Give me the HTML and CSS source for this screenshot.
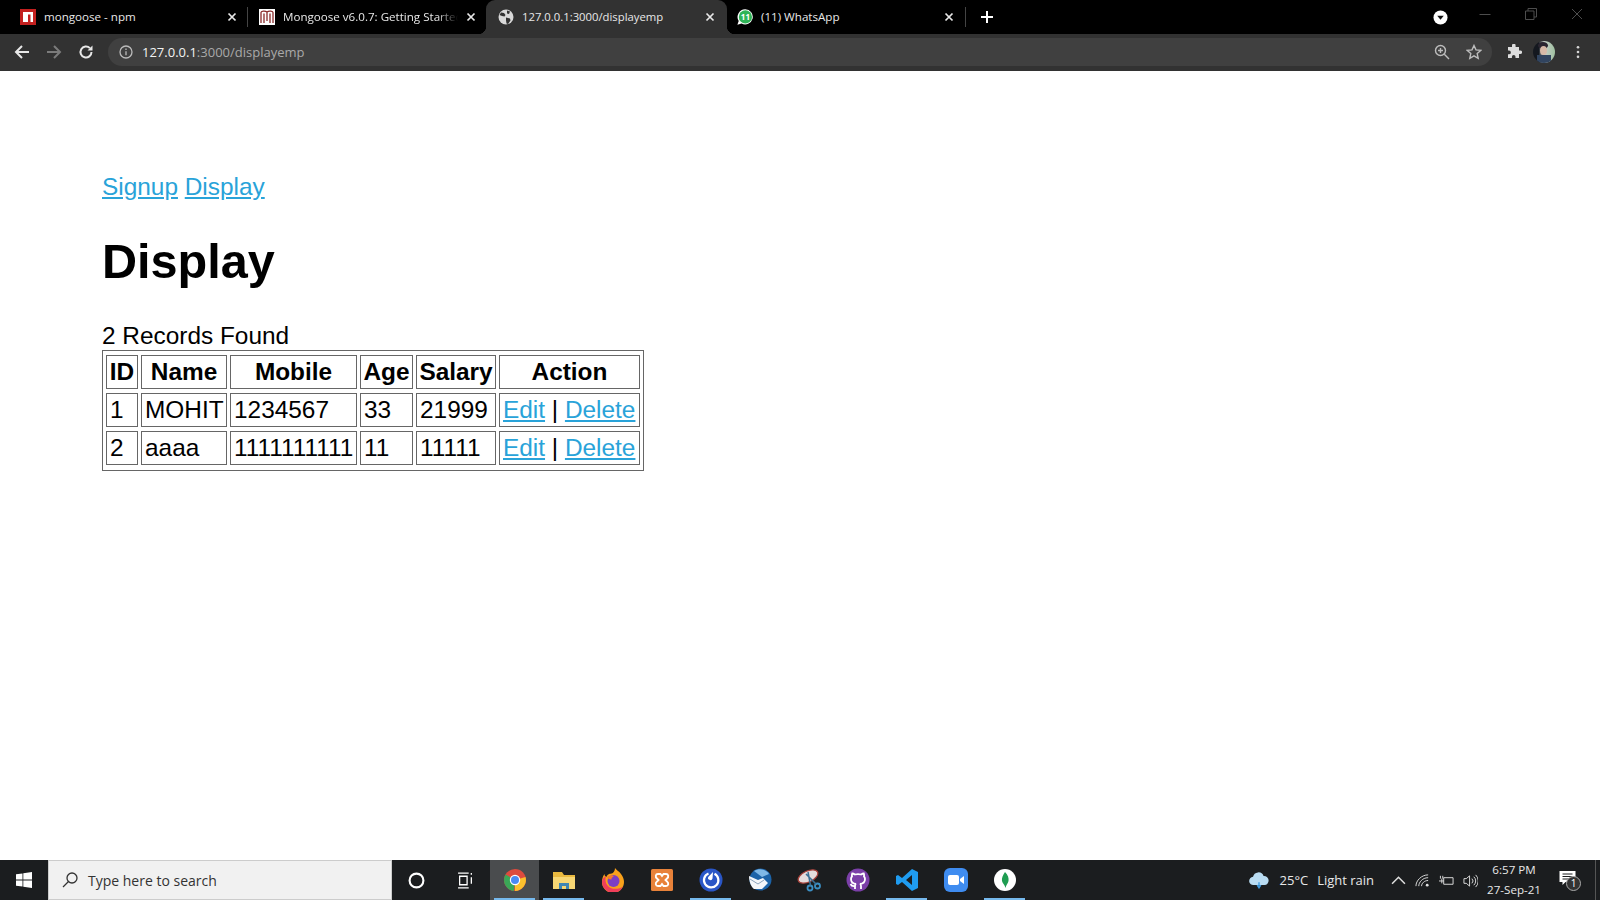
FILE: index.html
```html
<!DOCTYPE html>
<html lang="en">
<head>
<meta charset="utf-8">
<title>127.0.0.1:3000/displayemp</title>
<link rel="stylesheet" href="styles.css">
</head>
<body>
<header class="chrome">
  <div class="tabstrip">
    <div class="tab tab-first">
      <svg class="favicon" viewBox="0 0 16 16"><rect width="16" height="16" fill="#c3201f"/><path d="M3 3h10v10h-2.500V5.500H8V13H3z" fill="#fff"/></svg>
      <span class="tab-title">mongoose - npm</span>
      <svg class="tab-close" viewBox="0 0 10 10"><path d="M1.500 1.500l7 7M8.500 1.500l-7 7"/></svg>
    </div>
    <i class="tab-sep"></i>
    <div class="tab tab-second">
      <svg class="favicon" viewBox="0 0 16 16"><rect width="16" height="16" fill="#fff"/><path d="M2 14V3.500C2 2 6 1.500 8 3c2-1.500 6-1 6 .5V14M5 14V4.500M8 3v9M11 14V4.500" fill="none" stroke="#8a2a2a" stroke-width="1.300"/></svg>
      <span class="tab-title tab-fade">Mongoose v6.0.7: Getting Started</span>
      <svg class="tab-close" viewBox="0 0 10 10"><path d="M1.500 1.500l7 7M8.500 1.500l-7 7"/></svg>
    </div>
    <div class="tab tab-active">
      <svg class="favicon" viewBox="0 0 16 16"><circle cx="8" cy="8" r="7.500" fill="#d8d8d8"/><path d="M3 3.500l3 .5 1.500 2-1 1.500L4 7 1.500 6zM9 1.500l3 1-1 2.500-2-.5zM8 8.500l4 1 .5 2L10 15l-1.500-.5-.5-3z" fill="#323232"/></svg>
      <span class="tab-title">127.0.0.1:3000/displayemp</span>
      <svg class="tab-close" viewBox="0 0 10 10"><path d="M1.500 1.500l7 7M8.500 1.500l-7 7"/></svg>
    </div>
    <div class="tab tab-last">
      <svg class="favicon" viewBox="0 0 16 16"><path d="M8.300.3a7.600 7.600 0 1 1-3.700 14.300L.4 15.800l1.300-3.900A7.600 7.600 0 0 1 8.300.3z" fill="#fff"/><circle cx="8.400" cy="7.900" r="6.600" fill="#2fb457"/><text x="8.400" y="10.800" class="badge-num">11</text></svg>
      <span class="tab-title">(11) WhatsApp</span>
      <svg class="tab-close" viewBox="0 0 10 10"><path d="M1.500 1.500l7 7M8.500 1.500l-7 7"/></svg>
    </div>
    <i class="tab-sep"></i>
    <svg class="new-tab" viewBox="0 0 14 14"><path d="M7 1v12M1 7h12"/></svg>
    <svg class="tab-search" viewBox="0 0 16 16"><circle cx="8" cy="8" r="7.500" fill="#fff"/><path d="M4.500 6h7L8 10.500z" fill="#111"/></svg>
    <div class="win-controls">
      <svg viewBox="0 0 12 12"><path d="M.5 6.500h11"/></svg>
      <svg viewBox="0 0 12 12"><path d="M.5 3h8.500v8.500H.5zM3 3V.5h8.500V9H9"/></svg>
      <svg viewBox="0 0 12 12"><path d="M1 1l10 10M11 1L1 11"/></svg>
    </div>
  </div>
  <div class="toolbar">
    <svg class="nav-icon" viewBox="0 0 16 16"><path d="M15 8H2M8 2L2 8l6 6"/></svg>
    <svg class="nav-icon nav-dim" viewBox="0 0 16 16"><path d="M1 8h13M8 2l6 6-6 6"/></svg>
    <svg class="nav-icon" viewBox="0 0 16 16"><path d="M13.500 8a5.500 5.500 0 1 1-1.600-3.900"/><path class="solid" d="M14.500 1.500v5h-5z"/></svg>
    <div class="omnibox">
      <svg class="info" viewBox="0 0 14 14"><circle cx="7" cy="7" r="6"/><path d="M7 6.200v4M7 3.500v1.500"/></svg>
      <span class="url"><b>127.0.0.1</b>:3000/displayemp</span>
      <svg class="omni-icon zoom-ic" viewBox="0 0 16 16"><circle cx="6.500" cy="6.500" r="5"/><path d="M10.300 10.300L15 15M4 6.500h5M6.500 4v5"/></svg>
      <svg class="omni-icon star" viewBox="0 0 16 16"><path d="M8 1.500l2 4.400 4.700.5-3.500 3.200 1 4.700L8 11.900l-4.200 2.400 1-4.700L1.300 6.400 6 5.900z"/></svg>
    </div>
    <svg class="puzzle" viewBox="0 0 16 16"><path d="M6 1.500a1.800 1.800 0 0 1 3.600 0V3H13v3.500h1.300a1.800 1.800 0 0 1 0 3.600H13V14H9.500v-1.300a1.800 1.800 0 0 0-3.600 0V14H2v-3.700h1a1.900 1.900 0 0 0 0-3.800H2V3h4z" fill="#ddd"/></svg>
    <div class="avatar"><i class="avatar-hair"></i><i class="avatar-face"></i><i class="avatar-body"></i></div>
    <svg class="kebab" viewBox="0 0 4 16"><circle cx="2" cy="2.500" r="1.500"/><circle cx="2" cy="8" r="1.500"/><circle cx="2" cy="13.500" r="1.500"/></svg>
  </div>
</header>

<main class="page">
  <nav class="links"><a href="#">Signup</a> <a href="#">Display</a></nav>
  <h1>Display</h1>
  <div class="count">2 Records Found</div>
  <table class="records">
    <colgroup><col class="c-id"><col class="c-name"><col class="c-mobile"><col class="c-age"><col class="c-salary"><col class="c-action"></colgroup>
    <tr><th>ID</th><th>Name</th><th>Mobile</th><th>Age</th><th>Salary</th><th>Action</th></tr>
    <tr><td>1</td><td>MOHIT</td><td>1234567</td><td>33</td><td>21999</td><td><a href="#">Edit</a> | <a href="#">Delete</a></td></tr>
    <tr><td>2</td><td>aaaa</td><td>1111111111</td><td>11</td><td>11111</td><td><a href="#">Edit</a> | <a href="#">Delete</a></td></tr>
  </table>
</main>

<footer class="taskbar">
  <div class="start"><svg viewBox="0 0 16 16"><path d="M0 2.300l6.500-.9v6.200H0zM7.300 1.300L16 0v7.600H7.300zM0 8.400h6.500v6.200L0 13.700zM7.300 8.400H16V16l-8.700-1.300z" fill="#fff"/></svg></div>
  <div class="search">
    <svg viewBox="0 0 16 16"><circle cx="10" cy="6" r="5"/><path d="M6.500 9.500L1 15"/></svg>
    <span>Type here to search</span>
  </div>
  <div class="tb-btn"><svg class="tb-ic tb-small" viewBox="0 0 16 16"><circle cx="8" cy="8" r="6.500" fill="none" stroke="#fff" stroke-width="2"/></svg></div>
  <div class="tb-btn"><svg class="tb-ic tb-small" viewBox="0 0 16 16"><path d="M1 1h10M1 15h10M2.500 4h7v8h-7zM13.500 1v1.500M13.500 5v6" fill="none" stroke="#fff" stroke-width="1.200"/></svg></div>
  <div class="tb-btn tb-current tb-open">
    <svg class="tb-ic" viewBox="0 0 24 24"><circle cx="12" cy="12" r="11" fill="#dd4b3e"/><path d="M12 12L22.500 9A11 11 0 0 1 12 23z" fill="#fbc02d"/><path d="M12 12l-1 11A11 11 0 0 1 2.500 6.500z" fill="#3aa757"/><circle cx="12" cy="12" r="5.200" fill="#fff"/><circle cx="12" cy="12" r="4" fill="#4a8af4"/></svg>
  </div>
  <div class="tb-btn tb-open">
    <svg class="tb-ic" viewBox="0 0 24 24"><path d="M1 4h9l2 3h11v14H1z" fill="#e9b93f"/><path d="M1 9h22v12H1z" fill="#f7d774"/><path d="M7 21v-6h10v6h-3v-3h-4v3z" fill="#3f86b4"/></svg>
  </div>
  <div class="tb-btn">
    <svg class="tb-ic" viewBox="0 0 24 24"><path d="M14 0c1 2 4 3 6 6 2 3 3 5 3 8a11 11 0 0 1-22 0c0-3 .8-6 2.500-8 0 1.500.7 2.500 1.800 3C6.500 6 9 5.500 11 5.500c1.500-1 3-2.500 3-5.500z" fill="#f9a11b"/><path d="M1 14a11 11 0 0 0 21 4.500C19 21 12 22 8 19 4 16 4 11 5 8 3 9 1 11 1 14z" fill="#ef3f5a"/><circle cx="12.500" cy="13" r="6" fill="#7c3fc4"/><path d="M6 9c3-2 5-2 7-1-1 1-3 2-2.500 3.500C8 11.500 6.500 10.500 6 9z" fill="#f47a2a"/></svg>
  </div>
  <div class="tb-btn">
    <svg class="tb-ic" viewBox="0 0 24 24"><rect x="1" y="1" width="22" height="22" rx="1.500" fill="#e8823a"/><path d="M8 6h2.500L12 8l1.500-2H16c2.500 0 3 3 1 4.500L15.500 12l1.500 1.500c2 1.500 1.500 4.500-1 4.500h-2.500L12 16l-1.500 2H8c-2.500 0-3-3-1-4.500L8.500 12 7 10.500C5 9 5.500 6 8 6z" fill="none" stroke="#fff" stroke-width="1.900"/></svg>
  </div>
  <div class="tb-btn tb-open">
    <svg class="tb-ic" viewBox="0 0 24 24"><circle cx="12" cy="12" r="11.500" fill="#2a56c6"/><path d="M9.500 5.500a7.200 7.200 0 1 0 6 .3" fill="none" stroke="#fff" stroke-width="2.200"/><path d="M14 4l-.5 6.500a2.200 2.200 0 1 1-3.800-2z" fill="#fff"/></svg>
  </div>
  <div class="tb-btn">
    <svg class="tb-ic" viewBox="0 0 24 24"><circle cx="12.500" cy="11.500" r="11" fill="#1c63a8"/><path d="M6 3c5-3 12-2 15 3l-7 3z" fill="#7fb8e6"/><path d="M1 8l9 4 5-2 5 5-6 6H6c-3-2-5-8-5-13z" fill="#f3f6fa"/><path d="M2 11l8 5 6-4" fill="none" stroke="#8aa3bd"/></svg>
  </div>
  <div class="tb-btn">
    <svg class="tb-ic" viewBox="0 0 24 24"><ellipse cx="11" cy="8.500" rx="10.500" ry="5.500" transform="rotate(-25 11 8.500)" fill="#e4dcdc" stroke="#a8413a" stroke-width="1.300"/><circle cx="13" cy="20" r="2.500" fill="none" stroke="#3b8fc4" stroke-width="1.800"/><circle cx="20.500" cy="18" r="2.500" fill="none" stroke="#3b8fc4" stroke-width="1.800"/><path d="M13.500 17.500L11 4M19 16L9 6" stroke="#3b6f95" stroke-width="1.500"/></svg>
  </div>
  <div class="tb-btn">
    <svg class="tb-ic" viewBox="0 0 24 24"><circle cx="12" cy="12" r="11.500" fill="#7b3fa8"/><path d="M9 21v-3c-3 .7-4-1-4.500-2M15 21v-3c0-1-.3-1.700-1-2 3-.3 5-1.500 5-5 0-1-.4-2-1-2.700.2-.8.2-1.800-.2-2.800-1 0-2 .5-2.800 1a10 10 0 0 0-6 0C8.200 6 7.200 5.500 6.200 5.500 5.800 6.500 5.800 7.500 6 8.300 5.400 9 5 10 5 11c0 3.500 2 4.700 5 5-.7.300-1 1-1 2" fill="none" stroke="#fff" stroke-width="1.800"/></svg>
  </div>
  <div class="tb-btn tb-open">
    <svg class="tb-ic" viewBox="0 0 24 24"><path d="M17 1l6 3v16l-6 3L7 14l-4 3-2-1V8l2-1 4 3zM17 7l-6 5 6 5z" fill="#1f9cf0"/></svg>
  </div>
  <div class="tb-btn">
    <svg class="tb-ic" viewBox="0 0 24 24"><rect width="24" height="24" rx="6" fill="#3f8cf0"/><rect x="4" y="7" width="11" height="10" rx="2" fill="#fff"/><path d="M16 11l4-3v8l-4-3z" fill="#fff"/></svg>
  </div>
  <div class="tb-btn tb-open">
    <svg class="tb-ic" viewBox="0 0 24 24"><circle cx="12" cy="12" r="11" fill="#fff"/><path d="M12 4c3 3 4 6 3.500 9-.5 2.500-2.500 4-3 7-.5-3-3-4.500-3.500-7C8.500 10 10 7 12 4z" fill="#1f9d52"/></svg>
  </div>
  <div class="tray">
    <svg class="cloud" viewBox="0 0 24 18"><path d="M6 14a4.500 4.500 0 0 1-.5-9A6 6 0 0 1 17 4a5 5 0 0 1 1 10z" fill="#b9dcf2"/><path d="M12 11v5M10 14l2 3 2-3" stroke="#3f9be0" stroke-width="1.500" fill="none"/></svg>
    <span class="weather weather-temp">25°C</span>
    <span class="weather">Light rain</span>
    <svg class="tray-ic chev" viewBox="0 0 14 14"><path d="M1 10l6-6 6 6"/></svg>
    <svg class="tray-ic" viewBox="0 0 16 16"><path d="M1 14C1 8 7 2 14 2M4 14c0-4 4-9 10-9M7 14c0-3 3-6 7-6"/><circle class="solid" cx="13" cy="13" r="1.500"/></svg>
    <svg class="tray-ic" viewBox="0 0 16 16"><path d="M5 5h10v7H5zM3 6v5M0 8.500h5M1.500 3v3M4 3v3"/></svg>
    <svg class="tray-ic" viewBox="0 0 16 16"><path d="M1 6h2.500L7 3v11l-3.500-3H1zM9.500 6a3.500 3.500 0 0 1 0 5M11.500 4a6 6 0 0 1 0 9M13.500 2a9 9 0 0 1 0 13"/></svg>
    <div class="clock"><span>6:57 PM</span><span>27-Sep-21</span></div>
    <div class="action-center">
      <svg viewBox="0 0 16 16"><path d="M0 1h16v11H6l-3 3v-3H0z" fill="#fff"/><path d="M3 4h10M3 6.500h10M3 9h7" stroke="#1b1d1f"/></svg>
      <span class="notif">1</span>
    </div>
    <i class="show-desktop"></i>
  </div>
</footer>
</body>
</html>
```
FILE: styles.css
```css
* { box-sizing: border-box; }
html, body { height: 100%; }
body {
  margin: 0;
  display: flex;
  flex-direction: column;
  height: 900px;
  overflow: hidden;
  background: #fff;
  font-family: "Liberation Sans", Arial, sans-serif;
  color: #000;
}

/* Browser chrome */
.chrome { flex: none; font-family: "Open Sans", "Noto Sans", sans-serif; }
.tabstrip {
  display: flex;
  align-items: center;
  height: 34px;
  background: #000;
  color: #e8e8e8;
}
.tab {
  position: relative;
  flex: none;
  display: flex;
  align-items: center;
  height: 34px;
  font-size: 11.600px;
}
.tab-first { width: 247px; padding: 0 10px 0 20px; }
.tab-second { width: 238px; padding: 0 10px 0 11px; }
.tab-active {
  width: 241px;
  padding: 0 12px 0 12px;
  background: #323232;
  border-radius: 9px 9px 0 0;
  font-size: 11.300px;
}
.tab-active::before, .tab-active::after {
  content: "";
  position: absolute;
  bottom: 0;
  width: 8px;
  height: 8px;
}
.tab-active::before {
  left: -8px;
  background: radial-gradient(circle at 0 0, transparent 8px, #323232 8.500px);
}
.tab-active::after {
  right: -8px;
  background: radial-gradient(circle at 100% 0, transparent 8px, #323232 8.500px);
}
.tab-last { width: 238px; padding: 0 11px 0 10px; }
.favicon { flex: none; width: 16px; height: 16px; margin-right: 8px; }
.tab-title {
  flex: 1;
  min-width: 0;
  padding-bottom: 2px;
  white-space: nowrap;
}
.tab-fade {
  overflow: hidden;
  -webkit-mask-image: linear-gradient(90deg, #000 88%, transparent 100%);
  mask-image: linear-gradient(90deg, #000 88%, transparent 100%);
}
.tab-close {
  flex: none;
  width: 10px;
  height: 10px;
  margin-left: 8px;
  fill: none;
  stroke: #e8e8e8;
  stroke-width: 1.700;
}
.tab-sep { flex: none; width: 1px; height: 20px; background: #444; }
.badge-num {
  font: 700 8px "Open Sans", sans-serif;
  fill: #fff;
  text-anchor: middle;
}
.new-tab {
  flex: none;
  width: 14px;
  height: 14px;
  margin-left: 14px;
  fill: none;
  stroke: #fff;
  stroke-width: 2;
}
.tab-search { flex: none; width: 15px; height: 15px; margin-left: 439px; }
.win-controls {
  display: flex;
  align-items: center;
  gap: 34px;
  margin-left: auto;
  padding: 0 17px 6px 0;
}
.win-controls svg {
  width: 12px;
  height: 12px;
  fill: none;
  stroke: #4d4d4d;
  stroke-width: 1;
}

.toolbar {
  display: flex;
  align-items: center;
  height: 37px;
  padding: 4px 0 5px 14px;
  background: #323232;
}
.nav-icon {
  flex: none;
  width: 16px;
  height: 16px;
  margin-right: 16px;
  fill: none;
  stroke: #e8e8e8;
  stroke-width: 2;
}
.nav-dim { stroke: #7b7b7b; }
.nav-icon .solid { fill: #e8e8e8; stroke: none; }
.omnibox {
  flex: none;
  display: flex;
  align-items: center;
  width: 1384px;
  height: 28px;
  margin-left: -2px;
  padding: 0 10px 0 11px;
  border-radius: 14px;
  background: #404040;
  font-size: 13px;
  color: #a9a9a9;
}
.info {
  flex: none;
  width: 14px;
  height: 14px;
  margin-right: 9px;
  fill: none;
  stroke: #bbb;
  stroke-width: 1.300;
}
.url { flex: 1; }
.url b { font-weight: 400; color: #f2f2f2; }
.omni-icon {
  flex: none;
  width: 16px;
  height: 16px;
  fill: none;
  stroke: #bdbdbd;
  stroke-width: 1.400;
}
.star { margin-left: 16px; }
.puzzle { flex: none; width: 16px; height: 16px; margin-left: 14px; }
.avatar {
  position: relative;
  flex: none;
  width: 22px;
  height: 22px;
  margin-left: 11px;
  border-radius: 50%;
  overflow: hidden;
  background: linear-gradient(90deg, #14181f 0 25%, #c6cfc8 50%, #9fc0a0);
}
.avatar-hair {
  position: absolute;
  left: 5px;
  top: 1px;
  width: 10px;
  height: 7px;
  border-radius: 50%;
  background: #2a2530;
}
.avatar-face {
  position: absolute;
  left: 7px;
  top: 5px;
  width: 7px;
  height: 9px;
  border-radius: 50%;
  background: #d7b9a7;
}
.avatar-body {
  position: absolute;
  left: 4px;
  top: 14px;
  width: 14px;
  height: 9px;
  background: #31445f;
}
.kebab { flex: none; width: 4px; height: 14px; margin-left: 21px; fill: #d6d6d6; }

/* Page */
.page { flex: 1; padding: 102px 0 0 102px; font-size: 24.400px; }
.links { line-height: 28px; }
a { color: #29a3d9; }
h1 { margin: 32px 0 33px; font-size: 48.600px; line-height: 56px; font-weight: 700; }
.count { line-height: 28px; }
.records {
  width: 542px;
  table-layout: fixed;
  padding-bottom: 1px;
  border: 1px solid #666;
  border-spacing: 3px 4px;
  border-collapse: separate;
}
.records th, .records td {
  height: 34px;
  padding: 0 2px;
  border: 1px solid #666;
  white-space: nowrap;
}
.records td { padding-left: 3px; }
.c-id { width: 32px; }
.c-name { width: 86px; }
.c-mobile { width: 127px; }
.c-age { width: 53px; }
.c-salary { width: 80px; }
.c-action { width: 141px; }

/* Taskbar */
.taskbar {
  flex: none;
  display: flex;
  align-items: stretch;
  height: 40px;
  background: #1b1d1f;
  font-family: "Open Sans", "Noto Sans", sans-serif;
  color: #e8e8e8;
}
.start { flex: none; display: flex; align-items: center; justify-content: center; width: 48px; }
.start svg { width: 16px; height: 16px; }
.search {
  flex: none;
  display: flex;
  align-items: center;
  gap: 10px;
  width: 344px;
  padding-left: 13px;
  background: #f1f1f1;
  border: 1px solid #ccc;
  color: #333;
  font-size: 14px;
}
.search svg {
  width: 16px;
  height: 16px;
  fill: none;
  stroke: #333;
  stroke-width: 1.300;
}
.tb-btn {
  position: relative;
  flex: none;
  display: flex;
  align-items: center;
  justify-content: center;
  width: 49px;
}
.tb-current { background: #4a4c4e; }
.tb-open::after {
  content: "";
  position: absolute;
  left: 4px;
  right: 4px;
  bottom: 0;
  height: 2px;
  background: #76b9ed;
}
.tb-ic { width: 24px; height: 24px; }
.tb-small { width: 17px; height: 17px; }
.tray {
  flex: 1;
  display: flex;
  align-items: center;
  justify-content: flex-end;
  font-size: 13px;
}
.cloud { flex: none; width: 22px; height: 17px; margin-right: 10px; }
.weather { margin-right: 11px; white-space: nowrap; }
.weather-temp { margin-right: 9px; }
.tray-ic {
  flex: none;
  width: 15px;
  height: 15px;
  margin-left: 9px;
  fill: none;
  stroke: #e0e0e0;
  stroke-width: 1;
}
.tray-ic .solid { fill: #e0e0e0; stroke: none; }
.chev { margin-left: 6px; stroke-width: 1.400; }
.clock {
  display: flex;
  flex-direction: column;
  align-items: center;
  margin-left: 9px;
  font-size: 11.600px;
  line-height: 20px;
}
.action-center { position: relative; width: 20px; height: 20px; margin-left: 18px; }
.action-center svg { width: 17px; height: 16px; display: block; }
.notif {
  position: absolute;
  left: 7px;
  top: 6px;
  width: 15px;
  height: 15px;
  border: 1px solid #aaa;
  border-radius: 50%;
  background: #333;
  font-size: 10px;
  line-height: 13px;
  text-align: center;
  color: #fff;
}
.show-desktop { width: 1px; height: 40px; margin: 0 4px 0 16px; background: #555; }
```
